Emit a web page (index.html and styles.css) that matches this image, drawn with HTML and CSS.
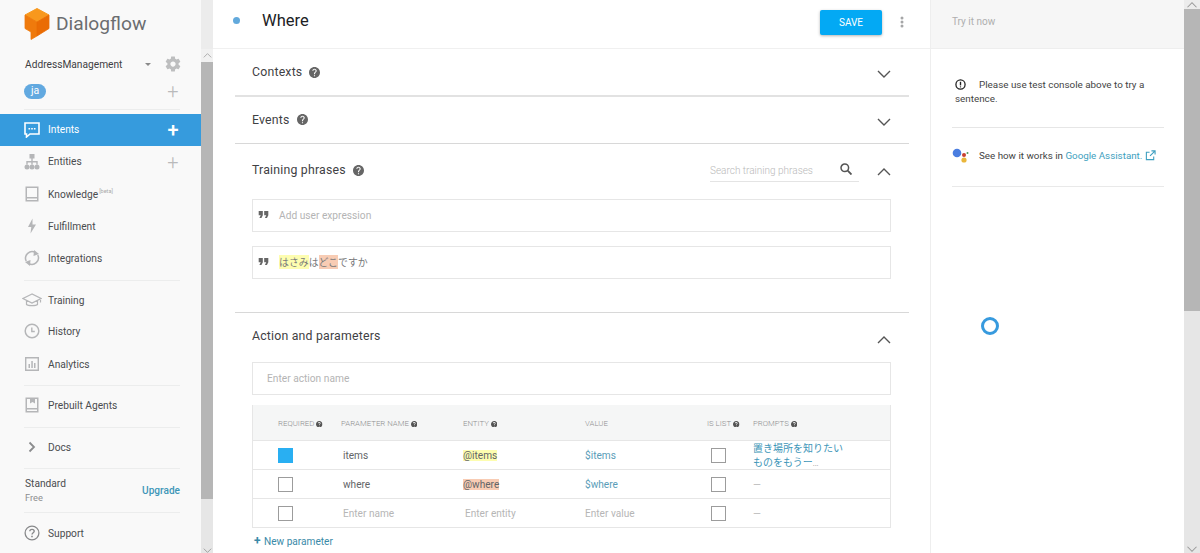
FILE: index.html
```html
<!DOCTYPE html>
<html lang="en">
<head>
<meta charset="utf-8">
<title>Dialogflow</title>
<link rel="stylesheet" href="styles.css">
</head>
<body>
<svg class="defs" width="0" height="0" aria-hidden="true">
  <symbol id="help" viewBox="2 2 20 20"><path d="M12 2C6.48 2 2 6.48 2 12s4.48 10 10 10 10-4.48 10-10S17.52 2 12 2zm1 17h-2v-2h2v2zm2.07-7.75l-.9.92C13.45 12.9 13 13.5 13 15h-2v-.5c0-1.1.45-2.1 1.17-2.83l1.24-1.26c.37-.36.59-.86.59-1.41 0-1.1-.9-2-2-2s-2 .9-2 2H8c0-2.21 1.79-4 4-4s4 1.79 4 4c0 .88-.36 1.68-.93 2.25z"/></symbol>
  <symbol id="quote" viewBox="4 6 16 12"><path d="M6 17h3l2-4V7H5v6h3zm8 0h3l2-4V7h-6v6h3z"/></symbol>
  <symbol id="chev-down" viewBox="0 0 14 8"><path d="M1 1l6 6 6-6" fill="none" stroke="currentColor" stroke-width="1.4"/></symbol>
  <symbol id="chev-up" viewBox="0 0 14 8"><path d="M1 7l6-6 6 6" fill="none" stroke="currentColor" stroke-width="1.4"/></symbol>
</svg>
<div class="app">
  <nav class="side">
    <div class="logo">
      <svg class="logo-mark" viewBox="0 0 26 32" width="26" height="32">
        <path d="M13 .5L25 7 13 14 1 7z" fill="#f8981d" stroke="#f8981d" stroke-linejoin="round"/>
        <path d="M1 7l12 7v14l-6 3.500V24L1 20.500z" fill="#ef7a0c" stroke="#ef7a0c" stroke-width=".8" stroke-linejoin="round"/>
        <path d="M25 7L13 14v14l12-7.500z" fill="#ea6c04" stroke="#ea6c04" stroke-width=".8" stroke-linejoin="round"/>
      </svg>
      <span class="logo-text">Dialogflow</span>
    </div>
    <div class="agent-row">
      <span class="agent-name">AddressManagement</span>
      <span class="caret"></span>
      <svg class="gear" viewBox="0 0 24 24" width="18" height="18"><path d="M19.43 12.98c.04-.32.07-.64.07-.98s-.03-.66-.07-.98l2.11-1.65c.19-.15.24-.42.12-.64l-2-3.460c-.12-.22-.39-.3-.61-.22l-2.490 1c-.52-.4-1.080-.73-1.690-.98l-.38-2.650C14.460 2.180 14.250 2 14 2h-4c-.25 0-.46.18-.49.42l-.38 2.650c-.61.25-1.170.59-1.690.98l-2.490-1c-.23-.09-.49 0-.61.22l-2 3.460c-.13.22-.07.49.12.64l2.110 1.650c-.04.32-.07.65-.07.98s.03.66.07.98l-2.110 1.650c-.19.15-.24.42-.12.64l2 3.460c.12.22.39.3.61.22l2.490-1c.52.4 1.080.73 1.690.98l.38 2.650c.03.24.24.42.49.42h4c.25 0 .46-.18.49-.42l.38-2.650c.61-.25 1.170-.59 1.690-.98l2.490 1c.23.09.49 0 .61-.22l2-3.460c.12-.22.07-.49-.12-.64l-2.110-1.650zM12 15.500c-1.930 0-3.500-1.570-3.500-3.500s1.570-3.500 3.500-3.500 3.500 1.570 3.500 3.500-1.570 3.500-3.500 3.500z"/></svg>
    </div>
    <div class="lang-row">
      <span class="lang">ja</span>
      <span class="plus">+</span>
    </div>
    <div class="rule rule-lang"></div>
    <a class="item active item-up">
      <svg class="ico" viewBox="0 0 16 16" width="16" height="16"><path d="M1 1h14v11H6l-3.500 3v-3H1z" fill="none" stroke="#fff" stroke-width="1.600"/><path d="M4.500 6h1.600v1.600H4.500zM7.200 6h1.600v1.600H7.200zM9.900 6h1.600v1.600H9.900z" fill="#fff"/></svg>
      <span class="label">Intents</span><span class="plus plus-on">+</span>
    </a>
    <a class="item item-up">
      <svg class="ico" viewBox="0 0 16 16" width="16" height="16"><path d="M5.500 0h5v4.500h-5zM7.300 4.500h1.400V7h5v3.500h-1.400V8.400H8.700v2.100H7.300V8.400H3.700v2.100H2.300V7h5z"/><circle cx="3" cy="13" r="2.500"/><circle cx="8" cy="13" r="2.500"/><circle cx="13" cy="13" r="2.500"/></svg>
      <span class="label">Entities</span><span class="plus">+</span>
    </a>
    <a class="item">
      <svg class="ico" viewBox="0 0 16 16" width="16" height="16"><path d="M1.500 .5h13v15h-13zM3 2v9h10V2zM3 12.500V14h10v-1.500z" fill-rule="evenodd"/></svg>
      <span class="label">Knowledge<sup class="beta">[beta]</sup></span>
    </a>
    <a class="item">
      <svg class="ico" viewBox="0 0 16 16" width="16" height="16"><path d="M8.500 0.500L4 9h3.300L6.500 15.500 12 6.500H8.500z"/></svg>
      <span class="label">Fulfillment</span>
    </a>
    <a class="item">
      <svg class="ico" viewBox="0 0 16 16" width="16" height="16"><path d="M2.200 11A6.500 6.500 0 0 1 11.500 2.700M13.800 5A6.500 6.500 0 0 1 4.500 13.300" fill="none" stroke="#b5b6b8" stroke-width="1.500"/><path d="M10 0L15 4 9.500 6zM6 16L1 12 6.500 10z"/></svg>
      <span class="label">Integrations</span>
    </a>
    <div class="rule rule-int"></div>
    <a class="item item-train">
      <svg class="ico ico-wide" viewBox="0 0 20 16" width="20" height="16"><path d="M10 2L1 6.500 10 11l9-4.500zM4.500 8.500v4c1.500 1.500 9.500 1.500 11 0v-4M18.500 6.500v4" fill="none" stroke="#b5b6b8" stroke-width="1.200"/></svg>
      <span class="label">Training</span>
    </a>
    <a class="item item-tight">
      <svg class="ico" viewBox="0 0 16 16" width="16" height="16"><circle cx="8" cy="8" r="6.800" fill="none" stroke="#b5b6b8" stroke-width="1.500"/><path d="M7.800 4.500v4h3" fill="none" stroke="#b5b6b8" stroke-width="1.400"/></svg>
      <span class="label">History</span>
    </a>
    <a class="item">
      <svg class="ico" viewBox="0 0 16 16" width="16" height="16"><path d="M1 1h14v14H1zM2.400 2.400v11.200h11.200V2.400z" fill-rule="evenodd"/><path d="M4.500 8h1.500v4H4.500zM7.300 5h1.500v7H7.300zM10 7h1.500v5H10z"/></svg>
      <span class="label">Analytics</span>
    </a>
    <div class="rule rule-ana"></div>
    <a class="item">
      <svg class="ico" viewBox="0 0 16 16" width="16" height="16"><path d="M1.500 .5h13v15h-13zM3 2v9h10V2h-2v4.500L8.500 5 6 6.500V2zM3 12.500V14h10v-1.500z" fill-rule="evenodd"/></svg>
      <span class="label">Prebuilt Agents</span>
    </a>
    <div class="rule rule-pre"></div>
    <a class="item">
      <svg class="ico ico-doc" viewBox="0 0 16 16" width="16" height="16"><path d="M5.500 3.500l4.500 4.500-4.500 4.500" fill="none" stroke="#8b8c8e" stroke-width="1.800"/></svg>
      <span class="label">Docs</span>
    </a>
    <div class="rule rule-doc"></div>
    <div class="plan">
      <div><div class="plan-name">Standard</div><div class="plan-tier">Free</div></div>
      <a class="upgrade">Upgrade</a>
    </div>
    <div class="rule rule-plan"></div>
    <a class="item">
      <svg class="ico" viewBox="0 0 16 16" width="16" height="16"><circle cx="8" cy="8" r="6.900" fill="none" stroke="#88898b" stroke-width="1.300"/><path d="M5.800 6.200C5.900 3.700 10.200 3.700 10.200 6.200 10.200 7.800 8 7.800 8 9.600" fill="none" stroke="#88898b" stroke-width="1.400"/><path d="M7.200 10.800h1.600v1.500H7.200z" fill="#88898b"/></svg>
      <span class="label">Support</span>
    </a>
  </nav>

  <div class="bar bar-left">
    <div class="bar-btn"><svg viewBox="0 0 14 8" width="9" height="5"><use href="#chev-up"/></svg></div>
    <div class="bar-thumb"></div>
    <div class="bar-track"><svg viewBox="0 0 14 8" width="9" height="5"><use href="#chev-down"/></svg></div>
  </div>

  <main class="main">
    <header class="head">
      <span class="dot"></span>
      <h1 class="title">Where</h1>
      <button class="save">SAVE</button>
      <svg class="more" viewBox="0 0 4 12" width="4" height="12"><circle cx="2" cy="2" r="1.500"/><circle cx="2" cy="6" r="1.500"/><circle cx="2" cy="10" r="1.500"/></svg>
    </header>

    <section class="sec sec-ctx">
      <div class="sec-head">
        <h2>Contexts</h2><svg class="help"><use href="#help"/></svg>
        <svg class="chev"><use href="#chev-down"/></svg>
      </div>
    </section>
    <section class="sec sec-evt">
      <div class="sec-head">
        <h2>Events</h2><svg class="help"><use href="#help"/></svg>
        <svg class="chev"><use href="#chev-down"/></svg>
      </div>
    </section>
    <section class="sec sec-train">
      <div class="sec-head">
        <h2>Training phrases</h2><svg class="help"><use href="#help"/></svg>
        <div class="search">
          <span>Search training phrases</span>
          <svg viewBox="0 0 12 12" width="12" height="12"><circle cx="4.800" cy="4.800" r="3.800" fill="none" stroke="#555" stroke-width="1.500"/><path d="M7.700 7.700L11.500 11.500" stroke="#555" stroke-width="1.800"/></svg>
        </div>
        <svg class="chev"><use href="#chev-up"/></svg>
      </div>
      <div class="field">
        <svg class="quote"><use href="#quote"/></svg><span class="hint">Add user expression</span>
      </div>
      <div class="field field-two">
        <svg class="quote"><use href="#quote"/></svg><span class="phrase"><mark class="hl-y">はさみ</mark>は<mark class="hl-o">どこ</mark>ですか</span>
      </div>
    </section>
    <section class="sec sec-act">
      <div class="sec-head">
        <h2>Action and parameters</h2>
        <svg class="chev"><use href="#chev-up"/></svg>
      </div>
      <div class="field field-act"><span class="hint">Enter action name</span></div>
      <div class="table">
        <div class="row row-head">
          <div class="c c1">REQUIRED<svg class="help-s"><use href="#help"/></svg></div>
          <div class="c">PARAMETER NAME<svg class="help-s"><use href="#help"/></svg></div>
          <div class="c">ENTITY<svg class="help-s"><use href="#help"/></svg></div>
          <div class="c">VALUE</div>
          <div class="c">IS LIST<svg class="help-s"><use href="#help"/></svg></div>
          <div class="c">PROMPTS<svg class="help-s"><use href="#help"/></svg></div>
        </div>
        <div class="row">
          <div class="c c1"><span class="box on"></span></div>
          <div class="c c-name">items</div>
          <div class="c"><mark class="hl-y">@items</mark></div>
          <div class="c c-val">$items</div>
          <div class="c c-list"><span class="box"></span></div>
          <div class="c c-prompt">置き場所を知りたい<br>ものをもうー<small>...</small></div>
        </div>
        <div class="row">
          <div class="c c1"><span class="box"></span></div>
          <div class="c c-name">where</div>
          <div class="c"><mark class="hl-o">@where</mark></div>
          <div class="c c-val">$where</div>
          <div class="c c-list"><span class="box"></span></div>
          <div class="c c-dash">—</div>
        </div>
        <div class="row">
          <div class="c c1"><span class="box"></span></div>
          <div class="c c-name c-ph">Enter name</div>
          <div class="c c-ph c-ent">Enter entity</div>
          <div class="c c-ph">Enter value</div>
          <div class="c c-list"><span class="box"></span></div>
          <div class="c c-dash">—</div>
        </div>
      </div>
      <a class="new-param"><b>+</b> New parameter</a>
    </section>
  </main>

  <aside class="panel">
    <div class="panel-head">Try it now</div>
    <div class="panel-body">
      <p class="note"><svg class="note-ico" viewBox="0 0 12 12" width="11" height="11"><circle cx="6" cy="6" r="5" fill="none" stroke="#222" stroke-width="1.400"/><path d="M6 3v4" stroke="#222" stroke-width="1.500"/><path d="M6 8v1.200" stroke="#222" stroke-width="1.300"/></svg>Please use test console above to try a sentence.</p>
      <div class="assist">
        <svg class="ga" viewBox="0 0 17 17" width="17" height="17"><circle cx="5" cy="6" r="4.300" fill="#4a7de0"/><circle cx="12" cy="8" r="2" fill="#c8402f"/><circle cx="12" cy="13" r="2.600" fill="#eab63a"/><circle cx="15.500" cy="6" r="1" fill="#4c9a5a"/></svg>
        <span>See how it works in <a class="ga-link">Google Assistant.</a></span>
        <svg class="ext" viewBox="0 0 12 12" width="11" height="11"><path d="M9.500 7v3.500h-8v-8H5M7 1h4v4M11 1L5.500 6.500" fill="none" stroke="#3e9fc0" stroke-width="1.200"/></svg>
      </div>
      <div class="spinner"></div>
    </div>
  </aside>

  <div class="bar bar-right">
    <div class="bar-btn-r"><svg viewBox="0 0 14 8" width="12" height="6"><use href="#chev-up"/></svg></div>
    <div class="bar-thumb-r"></div>
    <div class="bar-track-r"><svg viewBox="0 0 14 8" width="12" height="6"><use href="#chev-down"/></svg></div>
  </div>
</div>
</body>
</html>
```

FILE: styles.css
```css
* { box-sizing: border-box; }
html, body { margin: 0; height: 100%; overflow: hidden; }
body { font-family: Roboto, "Noto Sans CJK JP", sans-serif; font-size: 12px; color: #4a4c4f; background: #fff; }
.defs { position: absolute; }
.app { display: grid; grid-template-columns: 201px 12px 717px 254px 16px; height: 553px; overflow: hidden; }

/* sidebar */
.side { background: #f9f9f9; display: flex; flex-direction: column; height: 553px; overflow: hidden; }
.logo { height: 49px; display: flex; align-items: center; padding-left: 24px; gap: 6px; }
.logo-mark { flex: none; margin-bottom: 2px; }
.logo-text { font-size: 19.200px; color: #6b6d70; margin-bottom: 3px; }
.agent-row { display: flex; align-items: center; height: 30px; padding-left: 25px; }
.agent-name { font-size: 10.200px; color: #3e4043; width: 120px; }
.caret { width: 0; height: 0; border: 3px solid transparent; border-top: 3px solid #8a8a8a; margin-top: 3px; }
.gear { fill: #bdbebf; margin-left: 13px; }
.lang-row { display: flex; align-items: center; justify-content: space-between; height: 24px; padding: 0 22px 0 24px; }
.lang { background: #62a9e0; color: #fff; width: 22px; height: 15px; border-radius: 8px; text-align: center; font-size: 10.500px; line-height: 14px; }
.plus { font-size: 20px; line-height: 20px; color: #b9babb; font-weight: 300; width: 12px; text-align: center; }
.rule { height: 1px; background: #eceded; margin: 0 21px 0 24px; flex: none; }
.rule-lang { margin-top: 6px; margin-bottom: 4px; }
.item { display: flex; align-items: center; height: 32px; padding-left: 24px; flex: none; color: #4a4c4f; }
.item-up { padding-bottom: 1px; }
.item .plus { margin-left: auto; margin-right: 22px; }
.item.active { background: #369bdd; color: #fff; }
.item .plus-on { color: #fff; font-weight: 500; }
.ico { flex: none; fill: #b5b6b8; margin-right: 8px; }
.ico-wide { margin-left: -2px; margin-right: 6px; }
.label { font-size: 10.200px; }
.beta { font-size: 5.500px; color: #a9a9a9; vertical-align: 5px; line-height: 0; margin-left: 1px; }
.rule-int { margin-top: 6px; }
.item-train { margin-top: 3px; }
.item-tight { height: 30px; margin-bottom: 2px; }
.rule-ana { margin-top: 5px; }
.rule-pre { margin-top: 6px; }
.rule-ana + .item { margin-top: 3px; }
.rule-pre + .item { margin-top: 3px; }
.rule-doc { margin-top: 5px; }
.plan { display: flex; justify-content: space-between; align-items: center; height: 43px; padding: 0 21px 0 25px; }
.plan-name { font-size: 10.200px; color: #4a4c4f; line-height: 14px; }
.plan-tier { font-size: 9.300px; color: #8d8e90; line-height: 14px; }
.upgrade { font-size: 10.100px; color: #3e96b8; font-weight: 500; }
.rule-plan + .item { margin-top: 4px; }

/* scrollbars */
.bar { display: flex; flex-direction: column; height: 553px; }
.bar-left { background: #ececec; }
.bar-btn { height: 13px; margin-top: 49px; background: #f1f1f1; display: flex; align-items: center; justify-content: center; color: #a6a6a6; }
.bar-thumb { height: 437px; background: #b6b6b6; }
.bar-track { flex: 1; background: #e6e6e6; display: flex; align-items: flex-end; justify-content: center; color: #999; }
.bar-btn-r { height: 9px; display: flex; align-items: center; justify-content: center; background: #ececec; color: #999; }
.bar-thumb-r { height: 302px; background: #b6b6b6; }
.bar-track-r { flex: 1; background: #e6e6e6; display: flex; align-items: flex-end; justify-content: center; color: #999; padding-bottom: 1px; }

/* main */
.main { background: #fff; min-width: 0; height: 553px; overflow: hidden; }
.head { height: 49px; display: flex; align-items: center; border-bottom: 1px solid #f0f0f0; padding-left: 20px; }
.dot { width: 7px; height: 7px; border-radius: 50%; background: #62a9dc; margin-bottom: 8px; }
.title { font-size: 16.500px; font-weight: 400; color: #202124; margin: 0 0 8px 22px; flex: 1; }
.save { width: 62px; height: 25px; background: #03a9f4; color: #fff; border: 0; border-radius: 2px; font: 400 10px Roboto, sans-serif; box-shadow: 0 1px 3px rgba(0,0,0,.3); padding: 0; margin-bottom: 3px; }
.more { fill: #a5a6a7; margin: 0 26px 4px 18px; }
.sec { margin: 0 21px 0 22px; padding: 0 18px 0 17px; border-bottom: 1px solid #d8d8d8; }
.sec-ctx { height: 48px; border-bottom: 2px solid #e2e2e2; }
.sec-evt { height: 47px; }
.sec-train { height: 169px; }
.sec-act { border: 0; }
.sec-head { display: flex; align-items: center; }
.sec-ctx .sec-head { height: 46px; }
.sec-evt .sec-head { height: 46px; padding-bottom: 1px; }
.sec-train .sec-head { height: 55px; padding-bottom: 3px; }
.sec-act .sec-head { height: 49px; padding-bottom: 3px; }
h2 { margin: 0; font-size: 12.300px; font-weight: 400; color: #3f4144; letter-spacing: .2px; }
.help { width: 11px; height: 11px; fill: #666; margin-left: 7px; }
.chev { width: 14px; height: 8px; color: #555; margin-left: auto; margin-top: 4px; }
.sec-train .chev { margin-top: 3px; }
.sec-act .chev { margin-top: 7px; }
.search { margin-left: auto; width: 149px; height: 21px; margin-top: 2px; border-bottom: 1px solid #e4e4e4; display: flex; align-items: center; justify-content: space-between; padding-right: 7px; font-size: 10px; color: #b9b9b9; font-weight: 300; }
.search svg { margin-top: -4px; }
.search + .chev { margin-left: 18px; }
.field { height: 33px; border: 1px solid #e6e6e6; display: flex; align-items: center; padding-left: 5px; }
.field-two { margin-top: 14px; }
.quote { width: 11px; height: 9px; fill: #666; margin-right: 10px; margin-bottom: 2px; }
.hint { font-size: 10.200px; color: #b4b4b4; }
.phrase { font-size: 9.900px; color: #77787a; font-family: "Noto Sans CJK JP", sans-serif; margin-bottom: 1px; }
mark { color: inherit; }
.hl-y { background: #fdfdb0; }
.hl-o { background: #f8ccb4; }
.field-act { padding-left: 14px; }
.table { margin-top: 10px; border-left: 1px solid #e6e6e6; border-right: 1px solid #e6e6e6; }
.row { display: grid; grid-template-columns: 88px 122px 122px 122px 46px 1fr; height: 29px; align-items: center; border-bottom: 1px solid #e6e6e6; font-size: 10.100px; color: #636567; }
.row-head { height: 36px; background: #f5f6f6; font-size: 7.800px; font-weight: 300; color: #8f9091; padding-top: 2px; }
.c { white-space: nowrap; min-width: 0; }
.c1 { padding-left: 25px; }
.help-s { width: 6.500px; height: 6.500px; fill: #555; margin-left: 2px; vertical-align: -1px; }
.box { display: block; width: 15px; height: 15px; border: 1px solid #9c9c9c; background: #fff; }
.box.on { background: #29aff2; border-color: #29aff2; }
.c-name { padding-left: 2px; }
.c-val { color: #5a9db8; }
.c-list { padding-left: 4px; }
.c-prompt { color: #3e96b8; font-size: 10px; line-height: 14px; font-family: "Noto Sans CJK JP", sans-serif; }
.c-prompt small { font-size: 7px; color: #aaa; }
.c-dash { color: #bbb; }
.c-ph { color: #b6b6b6; }
.c-ent { padding-left: 2px; }
.new-param { display: block; margin-top: 6px; padding-left: 2px; font-size: 10.100px; color: #3a8aa8; }
.new-param b { font-size: 12px; margin-right: 1px; }

/* right panel */
.panel { border-left: 1px solid #eee; height: 553px; overflow: hidden; background: #fff; }
.panel-head { height: 49px; background: #f6f6f6; border-bottom: 1px solid #eee; padding: 16px 0 0 21px; font-size: 10px; color: #aeaeae; }
.panel-body { padding: 0 20px 0 21px; }
.note { margin: 29px 0 0; height: 50px; border-bottom: 1px solid #e6e6e6; font-size: 9.850px; line-height: 14px; color: #444; padding: 0 0 0 3px; }
.note-ico { vertical-align: -2px; margin-right: 13px; }
.assist { display: flex; align-items: center; height: 59px; border-bottom: 1px solid #e9e9e9; font-size: 9.800px; color: #444; white-space: nowrap; padding-bottom: 3px; }
.ga { margin-right: 10px; flex: none; }
.ga-link { color: #3e9fc0; }
.ext { margin-left: 3px; flex: none; }
.spinner { width: 18px; height: 18px; border: 3.500px solid #379ade; border-radius: 50%; margin: 130px 0 0 29px; }
```
